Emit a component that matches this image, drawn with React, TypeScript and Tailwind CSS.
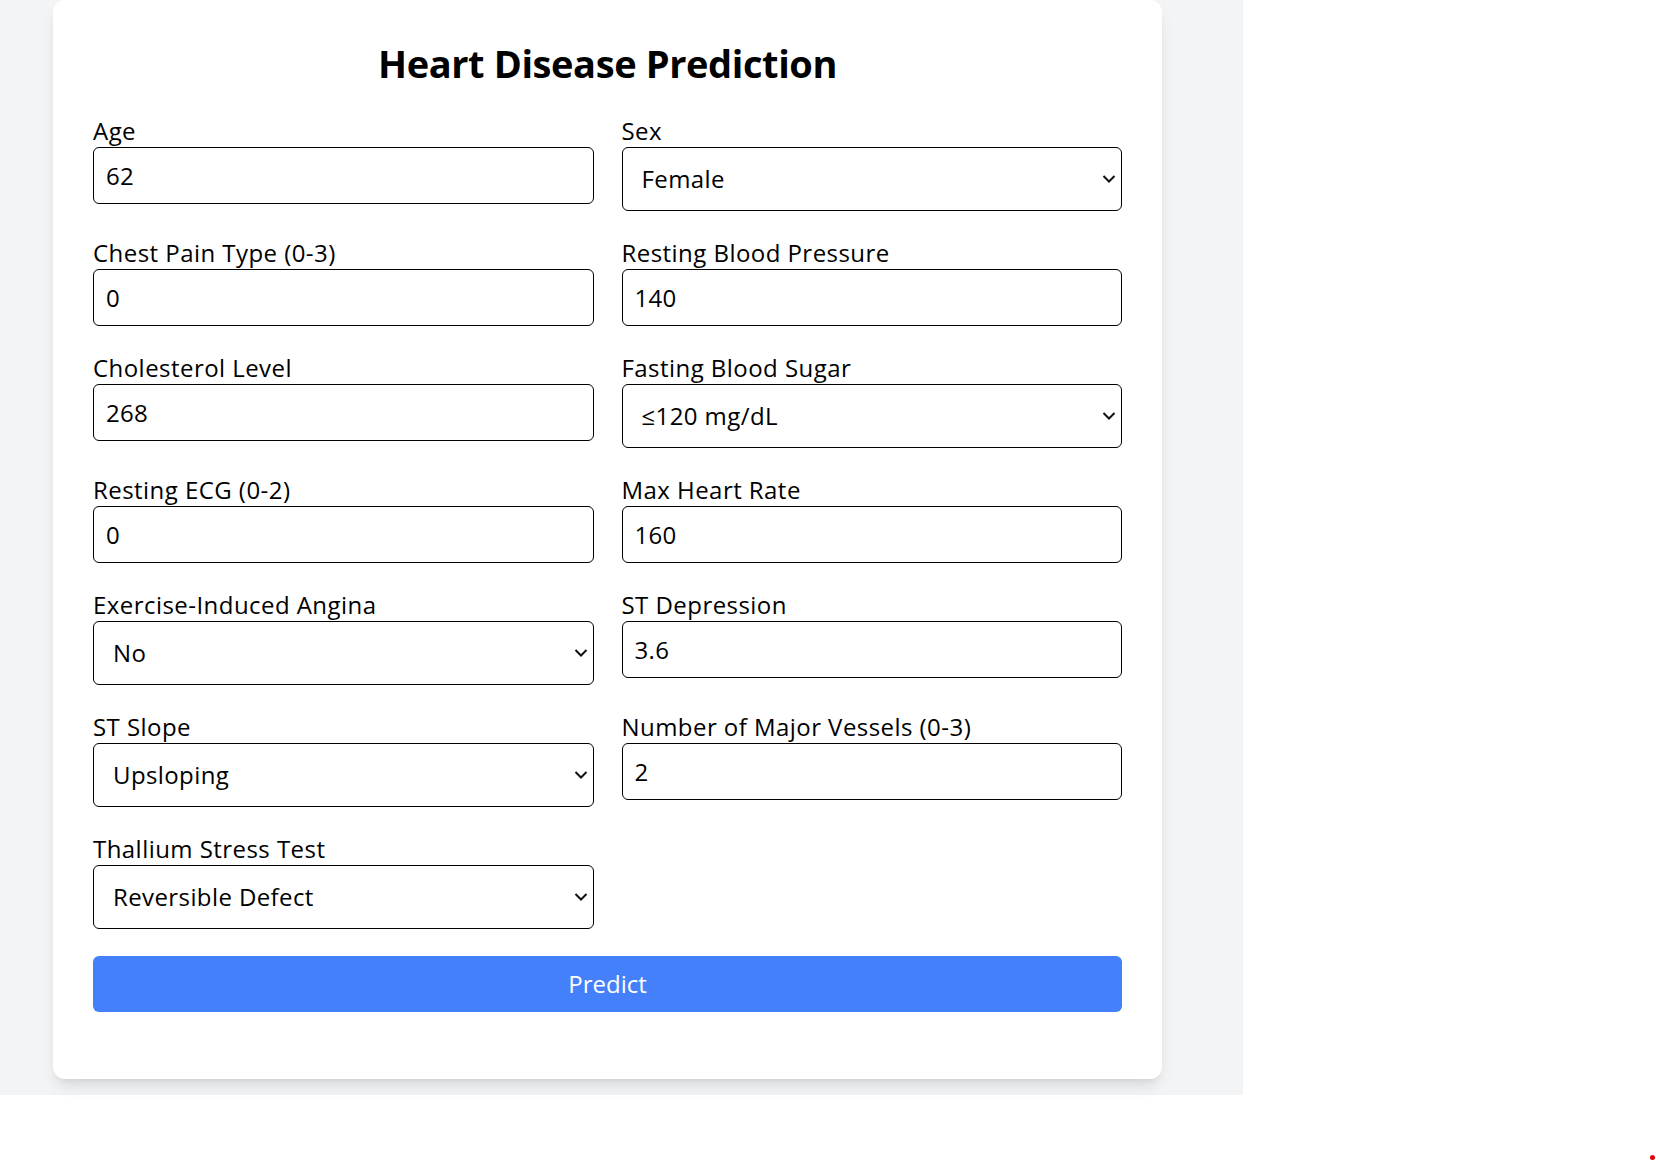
import React, { useState } from "react";

type Field = {
  name: string;
  label: string;
  value: string;
  options?: string[];
};

const fields: Field[] = [
  { name: "age", label: "Age", value: "62" },
  { name: "sex", label: "Sex", value: "Female", options: ["Male", "Female"] },
  { name: "cp", label: "Chest Pain Type (0-3)", value: "0" },
  { name: "trestbps", label: "Resting Blood Pressure", value: "140" },
  { name: "chol", label: "Cholesterol Level", value: "268" },
  {
    name: "fbs",
    label: "Fasting Blood Sugar",
    value: "≤120 mg/dL",
    options: ["≤120 mg/dL", ">120 mg/dL"],
  },
  { name: "restecg", label: "Resting ECG (0-2)", value: "0" },
  { name: "thalach", label: "Max Heart Rate", value: "160" },
  { name: "exang", label: "Exercise-Induced Angina", value: "No", options: ["No", "Yes"] },
  { name: "oldpeak", label: "ST Depression", value: "3.6" },
  {
    name: "slope",
    label: "ST Slope",
    value: "Upsloping",
    options: ["Upsloping", "Flat", "Downsloping"],
  },
  { name: "ca", label: "Number of Major Vessels (0-3)", value: "2" },
  {
    name: "thal",
    label: "Thallium Stress Test",
    value: "Reversible Defect",
    options: ["Normal", "Fixed Defect", "Reversible Defect"],
  },
];

const FormField = ({ field }: { field: Field }) => {
  return (
    <div className="flex flex-col">
      <label
        htmlFor={field.name}
        className="text-[24px] leading-[32px] tracking-[0.45px] text-black"
      >
        {field.label}
      </label>
      {field.options ? (
        <div className="relative">
          <select
            id={field.name}
            defaultValue={field.value}
            className="appearance-none w-full h-[64px] border border-black rounded-md bg-white pl-[19px] pr-10 text-[24px] tracking-[0.4px] text-black outline-none"
          >
            {field.options.map((opt) => (
              <option key={opt} value={opt}>
                {opt}
              </option>
            ))}
          </select>
          <svg
            className="absolute right-[6px] top-1/2 -translate-y-1/2 pointer-events-none"
            width="14"
            height="9"
            viewBox="0 0 14 9"
            fill="none"
          >
            <path d="M1.5 1.5 L7 7 L12.5 1.5" stroke="#111" strokeWidth="2" />
          </svg>
        </div>
      ) : (
        <input
          id={field.name}
          type="text"
          defaultValue={field.value}
          className="w-full h-[57px] border border-black rounded-md bg-white px-3 text-[24px] tracking-[0.3px] text-black outline-none"
        />
      )}
    </div>
  );
};

export default function App() {
  const [submitted, setSubmitted] = useState(false);

  return (
    <div
      className="relative min-h-screen bg-white"
      style={{ fontFamily: '"Open Sans", "Noto Sans", sans-serif' }}
    >
      <div className="w-[1243px] h-[1095px] bg-gray-100 pl-[53px]">
        <div className="w-[1109px] bg-white rounded-xl shadow-lg px-10 pt-[39px] pb-[67px]">
          <h1 className="text-center text-[38px] leading-[48px] tracking-[-0.4px] font-bold text-black mb-7">
            Heart Disease Prediction
          </h1>
          <form
            onSubmit={(e) => {
              e.preventDefault();
              setSubmitted(!submitted);
            }}
          >
            <div className="grid grid-cols-2 gap-x-7 gap-y-[26px]">
              {fields.map((f) => (
                <FormField key={f.name} field={f} />
              ))}
            </div>
            <button
              type="submit"
              className="mt-[27px] w-full h-[56px] rounded-md bg-[#4580fb] text-white text-[24px]"
            >
              Predict
            </button>
          </form>
        </div>
      </div>
      <span className="absolute left-[1650px] top-[1155px] w-[5px] h-[5px] rounded-full bg-red-600" />
    </div>
  );
}
